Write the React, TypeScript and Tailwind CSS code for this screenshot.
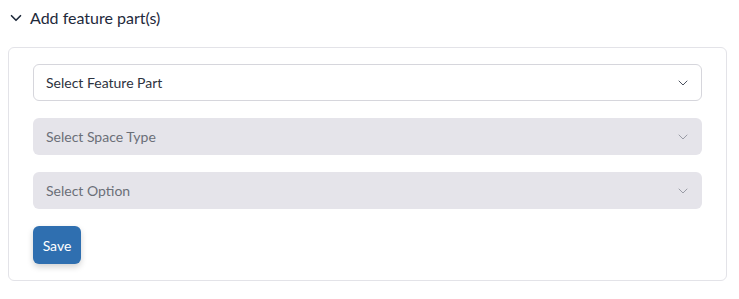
import { ChevronDown } from 'lucide-react';

const fields = [
  { label: 'Select Feature Part', disabled: false },
  { label: 'Select Space Type', disabled: true },
  { label: 'Select Option', disabled: true },
];

export default function App() {
  return (
    <div className="w-[739px] h-[299px] bg-white font-['Lato',sans-serif]">
      <button className="flex items-center h-[36px] pl-[7px] gap-[5px] text-[#1e293b]">
        <ChevronDown size={18} strokeWidth={2.2} />
        <span className="text-[16px] font-normal">Add feature part(s)</span>
      </button>

      <div className="mt-[11px] ml-2 w-[719px] rounded-md border border-[#e3e3e8] px-6 pt-4 pb-4">
        <div className="flex flex-col gap-[17px]">
          {fields.map((f) => (
            <div
              key={f.label}
              className={
                f.disabled
                  ? 'flex items-center justify-between h-[37px] rounded-md bg-[#e5e4ea] pl-[13px] pr-[11px] text-[14px] text-[#6b6f78]'
                  : 'flex items-center justify-between h-[37px] rounded-md border border-[#d6d6dc] bg-white pl-[12px] pr-[10px] text-[14px] text-[#2d3340]'
              }
            >
              <span>{f.label}</span>
              <ChevronDown
                size={16}
                strokeWidth={1.5}
                className={f.disabled ? 'text-[#9a9ca6]' : 'text-[#4b5260]'}
              />
            </div>
          ))}
        </div>
        <button className="mt-[17px] h-[38px] w-[48px] rounded-md bg-[#2f6fb0] text-[14px] text-white shadow-[0_3px_6px_rgba(0,0,0,0.18)]">
          Save
        </button>
      </div>
    </div>
  );
}
